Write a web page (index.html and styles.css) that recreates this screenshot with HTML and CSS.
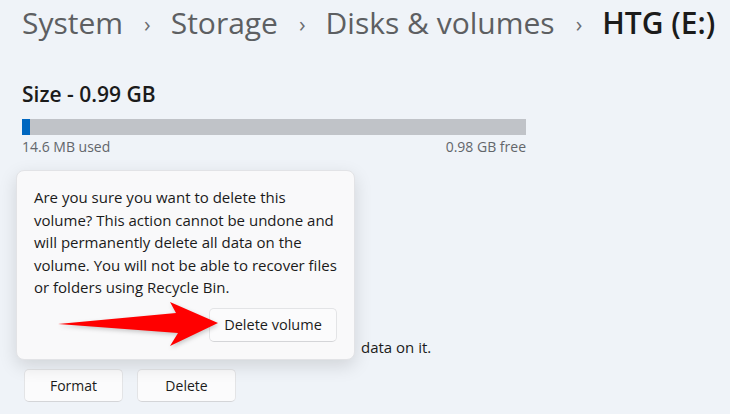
FILE: index.html
```html
<!DOCTYPE html>
<html lang="en">
<head>
  <meta charset="UTF-8" />
  <title>HTG (E:)</title>
  <link rel="stylesheet" href="styles.css">
</head>
<body>
  <div class="page">
    <nav class="crumbs">
      <span class="crumb">System</span>
      <span class="sep">&#x203A;</span>
      <span class="crumb">Storage</span>
      <span class="sep">&#x203A;</span>
      <span class="crumb">Disks &amp; volumes</span>
      <span class="sep">&#x203A;</span>
      <span class="crumb current">HTG (E:)</span>
    </nav>

    <section class="size">
      <h2>Size - 0.99 GB</h2>
      <div class="bar"><div class="bar-used" style="width: 1.6%"></div></div>
      <div class="bar-labels">
        <span>14.6 MB used</span>
        <span>0.98 GB free</span>
      </div>
    </section>

    <section class="format">
      <!-- rest of this line sits under the flyout -->
      <p class="format-text">data on it.</p>
      <div class="actions">
        <button class="btn">Format</button>
        <button class="btn">Delete</button>
      </div>

      <!-- confirm flyout opened from Delete -->
      <div class="flyout">
        <p>Are you sure you want to delete this volume? This action cannot be undone and will permanently delete all data on the volume. You will not be able to recover files or folders using Recycle Bin.</p>
        <div class="flyout-actions">
          <button class="btn">Delete volume</button>
        </div>
        <svg class="arrow" width="170" height="50" viewBox="0 0 170 50">
          <polygon points="0,22 118,11 112,0 160,21 112,44 120,31" fill="#ff0000"/>
        </svg>
      </div>
    </section>
  </div>
</body>
</html>
```

FILE: styles.css
```css
body {
  margin: 0;
  background-color: #eff3f8;
  font-family: "Open Sans", "Noto Sans", sans-serif;
  color: #1b1b1b;
}
.page {
  padding: 0 0 0 22px;
  width: 504px;
}
.crumbs {
  display: flex;
  align-items: center;
  white-space: nowrap;
  height: 46px;
  font-size: 30px;
  line-height: 44px;
  color: #5d5f62;
}
.sep {
  font-size: 22px;
  line-height: 40px;
  margin: 0 20px 0 21px;
  color: #6a6c70;
}
.crumb.current {
  color: #1b1b1b;
  font-weight: 600;
}
.size {
  padding-top: 36px;
}
.size h2 {
  margin: 0;
  font-size: 21px;
  line-height: 24px;
  font-weight: 600;
}
.bar {
  margin-top: 13px;
  height: 16px;
  background-color: #c0c3c8;
}
.bar-used {
  height: 100%;
  background-color: #0067c0;
}
.bar-labels {
  display: flex;
  justify-content: space-between;
  font-size: 14px;
  line-height: 24px;
  color: #63666b;
}
.format {
  position: relative;
  padding-top: 178px;
}
.format-text {
  margin: 0 0 12px;
  padding-left: 339px;
  font-size: 15px;
  line-height: 20px;
  white-space: nowrap;
}
.actions {
  display: flex;
  gap: 14px;
  padding-left: 2px;
}
.btn {
  font-family: inherit;
  font-size: 14px;
  color: #1b1b1b;
  background-color: #fbfbfc;
  border: 1px solid #e3e4e6;
  border-bottom-color: #d4d5d8;
  border-radius: 5px;
  height: 33px;
  padding: 0 10px;
}
.actions .btn {
  width: 99px;
}
.flyout {
  position: absolute;
  left: -6px;
  top: 11px;
  width: 303px;
  padding: 15px 17px 17px 17px;
  background-color: #f9f9fa;
  border: 1px solid #e2e3e6;
  border-radius: 8px;
  box-shadow: 0 6px 18px rgba(0, 0, 0, 0.13);
}
.flyout p {
  margin: 0;
  font-size: 15px;
  line-height: 22.5px;
}
.flyout-actions {
  display: flex;
  justify-content: flex-end;
  margin-top: 9px;
}
.flyout-actions .btn {
  width: 128px;
  height: 34px;
  font-size: 14.5px;
}
.arrow {
  position: absolute;
  left: 41px;
  top: 131px;
  filter: drop-shadow(1px 2px 2px rgba(0, 0, 0, 0.2));
}
```
